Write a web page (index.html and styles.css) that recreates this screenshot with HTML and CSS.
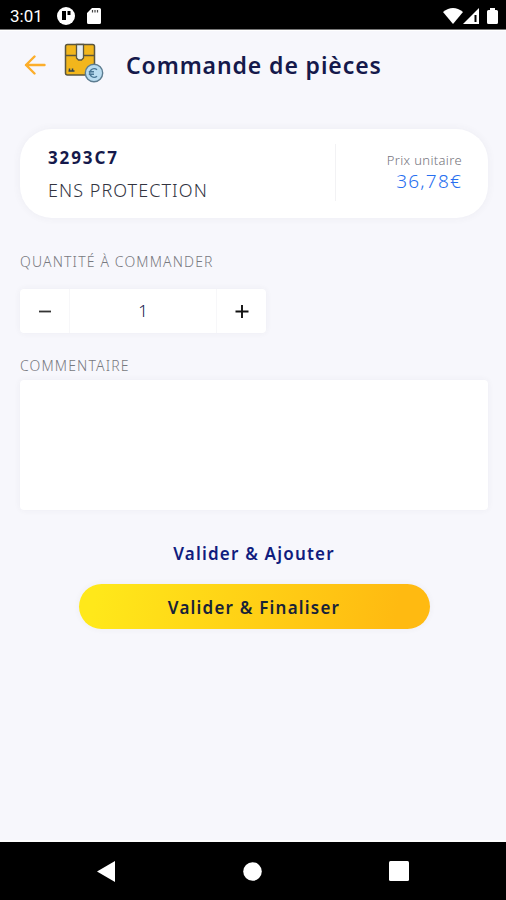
FILE: index.html
```html
<!DOCTYPE html>
<html lang="fr">
<head>
    <meta charset="UTF-8">
    <meta name="viewport" content="width=device-width, initial-scale=1.0">
    <title>Commande de pièces</title>
    <link rel="stylesheet" href="styles.css">
</head>
<body>
    <!-- Barre d'état -->
    <div class="status-bar">
        <span class="status-time">3:01</span>
        <svg class="status-app" width="18" height="18" viewBox="0 0 18 18">
            <circle cx="9" cy="9" r="9" fill="#fff"/>
            <path d="M5 4h4v9H5z" fill="#000"/>
            <path d="M10.500 4h3v4h-3z" fill="#000"/>
        </svg>
        <svg class="status-card" width="14" height="16" viewBox="0 0 14 16">
            <path d="M5 0h7.500A1.500 1.500 0 0 1 14 1.500v13a1.500 1.500 0 0 1-1.500 1.500h-11A1.500 1.500 0 0 1 0 14.500V5z" fill="#fff"/>
            <path d="M5.500 2v2.500M8 2v2.500M10.500 2v2.500" stroke="#444" stroke-width="1.200"/>
        </svg>
        <div class="status-right">
            <svg width="20" height="16" viewBox="0 0 20 16">
                <path d="M0 4Q10-4 20 4L10 16z" fill="#fff"/>
            </svg>
            <svg width="16" height="16" viewBox="0 0 16 16">
                <path d="M16 0v16H0z" fill="#fff"/>
                <path d="M12.500 7v7" stroke="#000" stroke-width="2"/>
            </svg>
            <svg class="status-battery" width="11" height="16" viewBox="0 0 11 16">
                <path d="M3 0h5v2H9.500Q11 2 11 3.500v11Q11 16 9.500 16h-8Q0 16 0 14.500v-11Q0 2 1.500 2H3z" fill="#fff"/>
            </svg>
        </div>
    </div>

    <main class="screen">
        <header class="header">
            <svg class="back" width="22" height="20" viewBox="0 0 22 20">
                <path d="M10.500 1.500L2 10l8.500 8.500M2 10h18.500" fill="none" stroke="#fcae2b" stroke-width="2.400" stroke-linecap="round" stroke-linejoin="round"/>
            </svg>
            <svg class="parcel" width="40" height="40" viewBox="0 0 40 40">
                <rect x="1.500" y="1.500" width="29" height="30.500" rx="2" fill="#f2b61c" stroke="#5a563f" stroke-width="1.500"/>
                <path d="M1.500 12.500h29" stroke="#5a563f" stroke-width="1.500"/>
                <path d="M12.500 1.500v13.500l2 2h3l2-2V1.500z" fill="#e5edf2" stroke="#5a563f" stroke-width="1.300"/>
                <path d="M4.500 28h6M5.500 28v-2.500M8.500 28v-2.500" stroke="#2c4152" stroke-width="1.500"/>
                <circle cx="30" cy="30" r="8.700" fill="#b9dcf0" stroke="#5c7c90" stroke-width="1.400"/>
                <path d="M33 26.800a4.300 4.300 0 1 0 0 6.400M24.800 28.800h5.200M24.800 31.200h5.200" fill="none" stroke="#4a7795" stroke-width="1.400"/>
            </svg>
            <h1 class="title">Commande de pièces</h1>
        </header>

        <section class="piece">
            <div class="piece-info">
                <div class="piece-ref">3293C7</div>
                <div class="piece-name">ENS PROTECTION</div>
            </div>
            <div class="piece-price">
                <div class="price-label">Prix unitaire</div>
                <div class="price-value">36,78€</div>
            </div>
        </section>

        <div class="label label-quantity">QUANTITÉ À COMMANDER</div>
        <div class="stepper">
            <button class="step" aria-label="Diminuer">
                <svg width="14" height="14" viewBox="0 0 14 14"><path d="M1 7.500h12" stroke="#333" stroke-width="1.800"/></svg>
            </button>
            <div class="quantity">1</div>
            <button class="step" aria-label="Augmenter">
                <svg width="14" height="14" viewBox="0 0 14 14"><path d="M.5 7.500h13M7 1v13" stroke="#111" stroke-width="1.900"/></svg>
            </button>
        </div>

        <div class="label label-comment">COMMENTAIRE</div>
        <textarea class="comment" aria-label="Commentaire"></textarea>

        <div class="actions">
            <button class="btn btn-link">Valider &amp; Ajouter</button>
            <button class="btn btn-primary">Valider &amp; Finaliser</button>
        </div>
    </main>

    <!-- Barre de navigation -->
    <nav class="nav-bar">
        <svg width="18" height="21" viewBox="0 0 18 21"><path d="M18 0v21L0 10.500z" fill="#fff"/></svg>
        <svg width="19" height="19" viewBox="0 0 19 19"><circle cx="9.500" cy="9.500" r="9.300" fill="#fff"/></svg>
        <svg width="20" height="20" viewBox="0 0 20 20"><rect width="20" height="20" rx="1.500" fill="#fff"/></svg>
    </nav>
</body>
</html>
```

FILE: styles.css
```css
* {
    box-sizing: border-box;
}

body {
    margin: 0;
    height: 900px;
    display: flex;
    flex-direction: column;
    overflow: hidden;
    background: #f7f7fc;
    font-family: "Noto Sans", "Open Sans", sans-serif;
    color: #15194b;
}

svg {
    display: block;
    flex: none;
}

.status-bar {
    height: 30px;
    flex: none;
    display: flex;
    align-items: center;
    padding: 2px 8px 0 10px;
    background: #000;
    border-bottom: 1px solid #777;
    color: #fff;
}

.status-time {
    width: 47px;
    font: 400 17px/20px Roboto, sans-serif;
}

.status-card {
    margin-left: 12px;
}

.status-right {
    display: flex;
    margin-left: auto;
}

.status-battery {
    margin-left: 8px;
}

.screen {
    flex: 1;
    padding: 0 18px 0 20px;
    border-top: 1px solid #fff;
    border-bottom: 2px solid #fff;
}

.header {
    height: 68px;
    display: flex;
    align-items: center;
    padding-left: 4px;
}

.parcel {
    margin: -4px 0 0 18px;
}

.title {
    margin: 0 0 0 22px;
    font-size: 23px;
    line-height: 30px;
    font-weight: 600;
    white-space: nowrap;
    letter-spacing: 0.9px;
}

.piece {
    height: 89px;
    margin-top: 30px;
    padding: 15px 26px 17px 28px;
    display: flex;
    border-radius: 32px;
    background: #fff;
    box-shadow: 0 0 8px rgba(60, 60, 90, 0.06);
}

.piece-info {
    flex: 1;
}

.piece-ref {
    font-size: 17px;
    line-height: 28px;
    font-weight: 700;
    letter-spacing: 1.9px;
}

.piece-name {
    margin-top: 4px;
    font-size: 18px;
    line-height: 28px;
    font-weight: 300;
    letter-spacing: 1.05px;
    color: #33343f;
}

.piece-price {
    width: 127px;
    padding-top: 7px;
    border-left: 1px solid #f2f2f4;
    text-align: right;
}

.price-label {
    font-size: 13px;
    line-height: 18px;
    font-weight: 300;
    letter-spacing: 0.35px;
    color: #74747c;
}

.price-value {
    font-size: 19px;
    line-height: 24px;
    font-weight: 300;
    letter-spacing: 1.2px;
    color: #286ff0;
}

.label {
    font-size: 14px;
    line-height: 20px;
    font-weight: 300;
    letter-spacing: 1.15px;
    color: #777980;
}

.label-quantity {
    margin-top: 34px;
}

.stepper {
    width: 246px;
    height: 44px;
    margin-top: 17px;
    display: flex;
    border-radius: 4px;
    background: #fff;
    box-shadow: 0 0 6px rgba(60, 60, 90, 0.06);
}

.step {
    width: 49px;
    padding: 0;
    display: flex;
    align-items: center;
    justify-content: center;
    border: none;
    background: none;
}

.quantity {
    flex: 1;
    border: solid #f7f7f9;
    border-width: 0 1px;
    font-size: 17px;
    line-height: 44px;
    font-weight: 300;
    text-align: center;
}

.label-comment {
    margin-top: 23px;
}

.comment {
    display: block;
    width: 100%;
    height: 130px;
    margin-top: 4px;
    border: none;
    border-radius: 4px;
    background: #fff;
    box-shadow: 0 0 6px rgba(60, 60, 90, 0.06);
    resize: none;
}

.actions {
    display: flex;
    flex-direction: column;
    align-items: center;
    margin-top: 29px;
}

.btn {
    padding: 0;
    border: none;
    font-family: inherit;
    font-size: 17px;
    font-weight: 600;
    letter-spacing: 1.2px;
}

.btn-link {
    height: 28px;
    background: none;
    color: #101c7e;
}

.btn-primary {
    width: 351px;
    height: 45px;
    margin-top: 17px;
    padding-top: 1px;
    border-radius: 23px;
    background: linear-gradient(100deg, #ffe81a 5%, #ffba11 90%);
    box-shadow: 0 0 6px rgba(60, 60, 90, 0.06);
    color: #172238;
}

.nav-bar {
    height: 58px;
    flex: none;
    display: flex;
    align-items: center;
    justify-content: space-between;
    padding: 0 97px;
    background: #000;
}
```
